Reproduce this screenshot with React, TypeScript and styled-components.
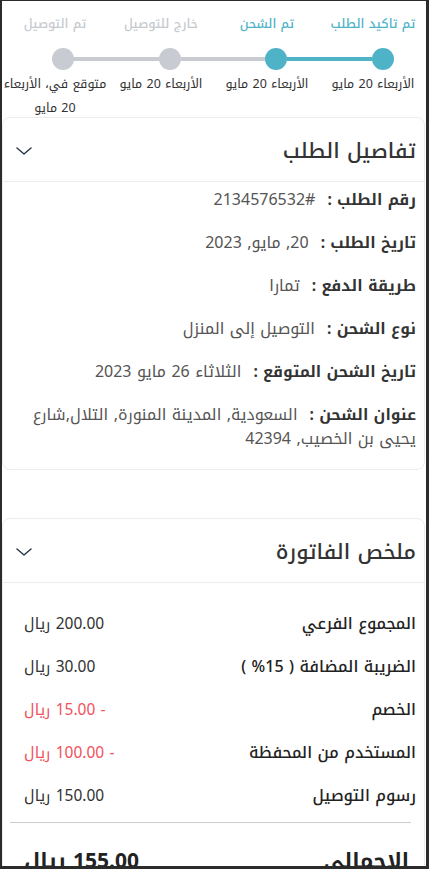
import React from "react";
import styled, { createGlobalStyle } from "styled-components";

const Global = createGlobalStyle`
  html, body { margin: 0; padding: 0; background: #ffffff; }
  body { font-family: "Noto Kufi Arabic", "Roboto", sans-serif; }
  * { box-sizing: border-box; }
`;

const Frame = styled.div`
  width: 429px;
  height: 869px;
  overflow: hidden;
  border-style: solid;
  border-color: #2b2b2b;
  border-width: 1px 3px 3px 2px;
  background: #fff;
  direction: rtl;
`;

const Stepper = styled.div`
  padding-top: 12px;
  height: 116px;
`;

const Labels = styled.div`
  display: grid;
  grid-template-columns: repeat(4, 1fr);
  text-align: center;
`;

const StepLabel = styled.div<{ $active?: boolean }>`
  font-size: 12.5px;
  line-height: 22px;
  font-weight: 500;
  color: ${(p) => (p.$active ? "#4fb3c8" : "#c6cad0")};
`;

const Track = styled.div`
  display: flex;
  align-items: center;
  padding: 0 32px 0 50px;
  margin-top: 13px;
  height: 22px;
`;

const Dot = styled.div<{ $active?: boolean }>`
  width: 22px;
  height: 22px;
  border-radius: 50%;
  flex: none;
  background: ${(p) => (p.$active ? "#4fb3c8" : "#c8cbd1")};
`;

const Line = styled.div<{ $active?: boolean }>`
  flex: 1;
  height: 4px;
  background: ${(p) => (p.$active ? "#4fb3c8" : "#c8cbd1")};
`;

const Dates = styled.div`
  display: grid;
  grid-template-columns: repeat(4, 1fr);
  text-align: center;
  margin-top: 2px;
`;

const DateLabel = styled.div`
  font-size: 12.5px;
  line-height: 24px;
  color: #333;
`;

const NoWrap = styled.span`
  white-space: nowrap;
`;

const Card = styled.section`
  border: 1px solid #ececec;
  border-radius: 8px;
  background: #fff;
  margin-right: 1px;
`;

const CardHeader = styled.div`
  height: 64px;
  display: flex;
  align-items: center;
  justify-content: space-between;
  padding: 2px 8px 0 13px;
  border-bottom: 1px solid #ececec;
`;

const Title = styled.h2`
  margin: 0;
  font-size: 21px;
  font-weight: 500;
  color: #333;
`;

const DetailsBody = styled.div`
  padding: 6px 8px 18px 8px;
  display: flex;
  flex-direction: column;
  gap: 19px;
`;

const DetailRow = styled.p`
  margin: 0;
  font-size: 16px;
  line-height: 24px;
  color: #555;
`;

const DetailLabel = styled.span`
  font-weight: 700;
  font-size: 15.5px;
  color: #333;
  margin-left: 12px;
`;

const Ltr = styled.span`
  direction: ltr;
  unicode-bidi: isolate;
`;

const Spacer = styled.div`
  height: 48px;
`;

const SummaryBody = styled.div`
  padding: 29px 0 0 0;
`;

const SummaryRows = styled.div`
  display: flex;
  flex-direction: column;
  gap: 19px;
`;

const SumRow = styled.div`
  display: flex;
  justify-content: space-between;
  align-items: center;
  padding: 0 8px 0 21px;
  line-height: 24px;
  font-size: 16px;
`;

const SumLabel = styled.span`
  font-weight: 500;
  color: #222;
`;

const SumValue = styled.span<{ $neg?: boolean }>`
  font-size: 15.5px;
  color: ${(p) => (p.$neg ? "#f2525c" : "#333")};
`;

const Divider = styled.hr`
  border: 0;
  border-top: 1px solid #c9cdd2;
  margin: 14px 13px 0 7px;
`;

const TotalRow = styled.div`
  display: flex;
  justify-content: space-between;
  align-items: center;
  padding: 18px 15px 0 21px;
  font-size: 21px;
  font-weight: 700;
  color: #222;
`;

const Chevron = () => (
  <svg width="16" height="8" viewBox="0 0 16 8" fill="none">
    <path d="M1 1 L8 7 L15 1" stroke="#2c3a4c" strokeWidth="1.5" strokeLinecap="round" strokeLinejoin="round" />
  </svg>
);

const steps: { label: string; date: React.ReactNode; active: boolean }[] = [
  { label: "تم تاكيد الطلب", date: "الأربعاء 20 مايو", active: true },
  { label: "تم الشحن", date: "الأربعاء 20 مايو", active: true },
  { label: "خارج للتوصيل", date: "الأربعاء 20 مايو", active: false },
  {
    label: "تم التوصيل",
    date: (
      <>
        <NoWrap>متوقع في، الأربعاء</NoWrap> 20 مايو
      </>
    ),
    active: false,
  },
];

const details: { label: string; value: React.ReactNode }[] = [
  { label: "رقم الطلب :", value: <Ltr>2134576532#</Ltr> },
  { label: "تاريخ الطلب :", value: "20, مايو, 2023" },
  { label: "طريقة الدفع :", value: "تمارا" },
  { label: "نوع الشحن :", value: "التوصيل إلى المنزل" },
  { label: "تاريخ الشحن المتوقع :", value: "الثلاثاء 26 مايو 2023" },
  { label: "عنوان الشحن :", value: "السعودية, المدينة المنورة, التلال,شارع يحيى بن الخصيب, 42394" },
];

const summary = [
  { label: "المجموع الفرعي", value: "200.00 ريال" },
  { label: "الضريبة المضافة ( 15% )", value: "30.00 ريال" },
  { label: "الخصم", value: "- 15.00 ريال", neg: true },
  { label: "المستخدم من المحفظة", value: "- 100.00 ريال", neg: true },
  { label: "رسوم التوصيل", value: "150.00 ريال" },
];

export default function App() {
  return (
    <>
      <Global />
      <Frame>
        <Stepper>
          <Labels>
            {steps.map((s) => (
              <StepLabel key={s.label} $active={s.active}>{s.label}</StepLabel>
            ))}
          </Labels>
          <Track>
            <Dot $active />
            <Line $active />
            <Dot $active />
            <Line />
            <Dot />
            <Line />
            <Dot />
          </Track>
          <Dates>
            {steps.map((s) => (
              <DateLabel key={s.label}>{s.date}</DateLabel>
            ))}
          </Dates>
        </Stepper>

        <Card>
          <CardHeader>
            <Title>تفاصيل الطلب</Title>
            <Chevron />
          </CardHeader>
          <DetailsBody>
            {details.map((d) => (
              <DetailRow key={d.label}>
                <DetailLabel>{d.label}</DetailLabel>
                {d.value}
              </DetailRow>
            ))}
          </DetailsBody>
        </Card>

        <Spacer />

        <Card>
          <CardHeader>
            <Title>ملخص الفاتورة</Title>
            <Chevron />
          </CardHeader>
          <SummaryBody>
            <SummaryRows>
              {summary.map((r) => (
                <SumRow key={r.label}>
                  <SumLabel>{r.label}</SumLabel>
                  <SumValue $neg={r.neg}>{r.value}</SumValue>
                </SumRow>
              ))}
            </SummaryRows>
            <Divider />
            <TotalRow>
              <span>الاجمالي</span>
              <span>155.00 ريال</span>
            </TotalRow>
          </SummaryBody>
        </Card>
      </Frame>
    </>
  );
}
